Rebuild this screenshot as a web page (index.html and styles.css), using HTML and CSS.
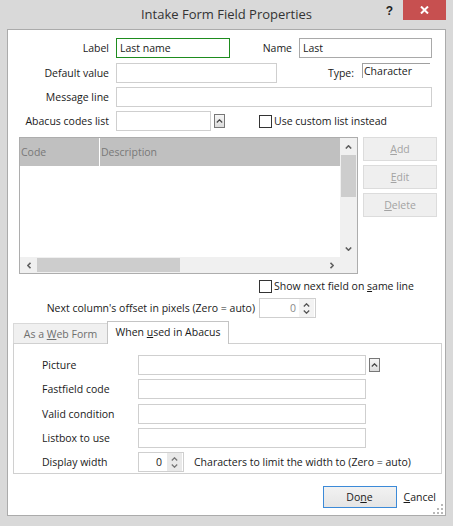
FILE: index.html
```html
<!DOCTYPE html>
<html>
<head>
<meta charset="utf-8">
<title>Intake Form Field Properties</title>
<link rel="stylesheet" href="styles.css">
</head>
<body>
<div class="window">
  <div class="titlebar">
    <div class="title">Intake Form Field Properties</div>
    <div class="controls">
      <span class="help">?</span>
      <span class="close"><svg width="9" height="8" viewBox="0 0 9 8"><path d="M1 0.5 L8 7.5 M8 0.5 L1 7.5" stroke="#fff" stroke-width="2"/></svg></span>
    </div>
  </div>
  <div class="client">
    <div class="top">
      <div class="row">
        <span class="lbl">Label</span>
        <div class="input w-label">Last name</div>
        <span class="lbl name-lbl">Name</span>
        <div class="input w-name">Last</div>
      </div>
      <div class="row r2">
        <span class="lbl">Default value</span>
        <div class="input w-default"></div>
        <span class="lbl type-lbl">Type:</span>
        <div class="static">Character</div>
      </div>
      <div class="row r3">
        <span class="lbl">Message line</span>
        <div class="input w-msg"></div>
      </div>
      <div class="row r3">
        <span class="lbl">Abacus codes list</span>
        <div class="input w-codes"></div>
        <span class="dropbtn"><svg width="7" height="4" viewBox="0 0 7 4"><polyline points="0.8,3.5 3.5,0.8 6.2,3.5" fill="none" stroke="#444" stroke-width="1.2"/></svg></span>
        <span class="check custom"><span class="box"></span><span>Use custom list instead</span></span>
      </div>
    </div>

    <div class="codes">
      <div class="grid">
        <div class="grid-top">
          <div class="grid-main">
            <div class="grid-head">
              <div class="col-code">Code</div>
              <div class="col-desc">Description</div>
            </div>
            <div class="grid-body"></div>
          </div>
          <div class="vscroll">
            <div class="sbtn"><svg width="7" height="4" viewBox="0 0 7 4"><polyline points="0.8,3.5 3.5,0.8 6.2,3.5" fill="none" stroke="#606060" stroke-width="1.6"/></svg></div>
            <div class="vthumb"></div>
            <div class="vtrack"></div>
            <div class="sbtn"><svg width="7" height="4" viewBox="0 0 7 4"><polyline points="0.8,0.5 3.5,3.2 6.2,0.5" fill="none" stroke="#606060" stroke-width="1.6"/></svg></div>
          </div>
        </div>
        <div class="hscroll">
          <div class="hbtn"><svg width="4" height="7" viewBox="0 0 4 7"><polyline points="3.5,0.8 0.8,3.5 3.5,6.2" fill="none" stroke="#606060" stroke-width="1.6"/></svg></div>
          <div class="hthumb"></div>
          <div class="htrack"></div>
          <div class="hbtn"><svg width="4" height="7" viewBox="0 0 4 7"><polyline points="0.5,0.8 3.2,3.5 0.5,6.2" fill="none" stroke="#606060" stroke-width="1.6"/></svg></div>
          <div class="corner"></div>
        </div>
      </div>
      <div class="btns">
        <div class="dbtn"><span><u>A</u>dd</span></div>
        <div class="dbtn"><span><u>E</u>dit</span></div>
        <div class="dbtn"><span><u>D</u>elete</span></div>
      </div>
    </div>

    <div class="check showrow"><span class="box"></span><span>Show next field on <u>s</u>ame line</span></div>

    <div class="offset-row">
      <span class="olbl">Next column's offset in pixels (Zero = auto)</span>
      <div class="spin spin-offset">
        <span class="val grey">0</span>
        <span class="arrows">
          <svg width="7" height="4" viewBox="0 0 7 4"><polyline points="0.8,3.5 3.5,0.8 6.2,3.5" fill="none" stroke="#555" stroke-width="1.3"/></svg>
          <svg width="7" height="4" viewBox="0 0 7 4"><polyline points="0.8,0.5 3.5,3.2 6.2,0.5" fill="none" stroke="#555" stroke-width="1.3"/></svg>
        </span>
      </div>
    </div>

    <div class="tabs">
      <div class="tab"><span>As a <u>W</u>eb Form</span></div>
      <div class="tab active"><span>When <u>u</u>sed in Abacus</span></div>
    </div>
    <div class="panel">
      <div class="prow">
        <span class="plbl">Picture</span>
        <div class="pinput"></div>
        <span class="dropbtn pdrop"><svg width="7" height="4" viewBox="0 0 7 4"><polyline points="0.8,3.5 3.5,0.8 6.2,3.5" fill="none" stroke="#444" stroke-width="1.2"/></svg></span>
      </div>
      <div class="prow">
        <span class="plbl">Fastfield code</span>
        <div class="pinput"></div>
      </div>
      <div class="prow">
        <span class="plbl">Valid condition</span>
        <div class="pinput"></div>
      </div>
      <div class="prow">
        <span class="plbl">Listbox to use</span>
        <div class="pinput"></div>
      </div>
      <div class="prow">
        <span class="plbl">Display width</span>
        <div class="spin spin-width">
          <span class="val">0</span>
          <span class="arrows">
            <svg width="7" height="4" viewBox="0 0 7 4"><polyline points="0.8,3.5 3.5,0.8 6.2,3.5" fill="none" stroke="#777" stroke-width="1.3"/></svg>
            <svg width="7" height="4" viewBox="0 0 7 4"><polyline points="0.8,0.5 3.5,3.2 6.2,0.5" fill="none" stroke="#777" stroke-width="1.3"/></svg>
          </span>
        </div>
        <span class="chars">Characters to limit the width to (Zero = auto)</span>
      </div>
    </div>

    <div class="footer">
      <div class="done"><span>Do<u>n</u>e</span></div>
      <div class="cancel"><u>C</u>ancel</div>
    </div>
    <svg class="grip" width="10" height="10" viewBox="0 0 10 10">
      <rect x="8" y="0" width="2" height="2" fill="#b8b8b8"/>
      <rect x="4" y="4" width="2" height="2" fill="#b8b8b8"/>
      <rect x="8" y="4" width="2" height="2" fill="#b8b8b8"/>
      <rect x="0" y="8" width="2" height="2" fill="#b8b8b8"/>
      <rect x="4" y="8" width="2" height="2" fill="#b8b8b8"/>
      <rect x="8" y="8" width="2" height="2" fill="#b8b8b8"/>
    </svg>
  </div>
</div>
</body>
</html>
```

FILE: styles.css
```css
* { box-sizing: border-box; }
html, body { margin: 0; padding: 0; }
body {
  font-family: "Open Sans", "Noto Sans", sans-serif;
  font-size: 10.5px;
  color: #1a1a1a;
  background: #d9d9d9;
}
.window {
  width: 453px;
  height: 526px;
  background: #d9d9d9;
  display: flex;
  flex-direction: column;
  overflow: hidden;
}
.titlebar {
  height: 29px;
  flex: none;
  display: grid;
}
.title, .controls { grid-area: 1 / 1; }
.title {
  text-align: center;
  line-height: 29px;
  font-size: 13px;
  color: #333;
}
.controls {
  justify-self: end;
  align-self: start;
  display: flex;
  align-items: flex-start;
  margin-right: 7px;
}
.help {
  font-family: "Liberation Sans", sans-serif;
  font-weight: bold;
  font-size: 12px;
  line-height: 12px;
  margin-top: 5px;
  margin-right: 10px;
  color: #222;
}
.close {
  width: 43px;
  height: 20px;
  background: #c75050;
  display: flex;
  align-items: center;
  justify-content: center;
}
.client {
  margin: 0 7px;
  height: 487px;
  background: #fff;
  border: 1px solid #ababab;
  position: relative;
}
.top {
  padding-top: 8px;
  display: flex;
  flex-direction: column;
}
.row {
  display: flex;
  align-items: center;
  height: 20px;
}
.r2 { margin-top: 5px; }
.r3 { margin-top: 4px; }
.lbl {
  width: 101px;
  margin-right: 7px;
  text-align: right;
  white-space: nowrap;
}
.input {
  height: 20px;
  border: 1px solid #cfcfcf;
  background: #fff;
  padding-left: 3px;
  line-height: 18px;
  white-space: nowrap;
}
.w-label { width: 114px; border-color: #1e8c1e; }
.name-lbl { width: 62px; }
.w-name { width: 133px; border-color: #a9a9a9; }
.w-default { width: 161px; }
.type-lbl { width: 77px; margin-right: 8px; }
.static {
  width: 68px;
  height: 15px;
  align-self: flex-start;
  border-top: 1px solid #a0a0a0;
  border-left: 1px solid #a0a0a0;
  line-height: 14px;
  padding-left: 1px;
}
.w-msg { width: 316px; }
.w-codes { width: 95px; margin-right: 3px; }
.dropbtn {
  width: 11px;
  height: 14px;
  border: 1px solid #777;
  background: linear-gradient(#f6f6f6, #dcdcdc);
  display: flex;
  align-items: center;
  justify-content: center;
}
.check {
  display: flex;
  align-items: center;
  white-space: nowrap;
}
.custom { margin-left: 34px; }
.box {
  width: 13px;
  height: 13px;
  border: 1px solid #333;
  background: #fff;
  margin-right: 2px;
  flex: none;
}

/* codes grid */
.codes {
  display: flex;
  gap: 5px;
  margin-top: 6px;
  padding-left: 11px;
}
.grid {
  width: 339px;
  height: 137px;
  border: 1px solid #adadad;
  display: flex;
  flex-direction: column;
}
.grid-top {
  height: 119px;
  display: flex;
}
.grid-main {
  flex: 1;
  display: flex;
  flex-direction: column;
}
.grid-head {
  height: 28px;
  background: #c0c0c0;
  display: flex;
  color: #787878;
  line-height: 28px;
}
.col-code {
  width: 80px;
  padding-left: 1px;
  border-right: 1px solid #fff;
}
.col-desc { padding-left: 1px; }
.grid-body { flex: 1; background: #fff; }
.vscroll {
  width: 17px;
  background: #f0f0f0;
  display: flex;
  flex-direction: column;
}
.sbtn {
  height: 17px;
  display: flex;
  align-items: center;
  justify-content: center;
}
.vthumb {
  height: 42px;
  margin: 0 1px;
  background: #cdcdcd;
}
.vtrack { flex: 1; }
.hscroll {
  height: 16px;
  background: #f0f0f0;
  display: flex;
}
.hbtn {
  width: 17px;
  display: flex;
  align-items: center;
  justify-content: center;
}
.hthumb {
  width: 143px;
  margin: 1px 0;
  background: #cdcdcd;
}
.htrack { flex: 1; }
.corner { width: 17px; background: #f0f0f0; }
.btns {
  width: 74px;
  display: flex;
  flex-direction: column;
  gap: 4px;
}
.dbtn {
  height: 24px;
  border: 1px solid #dcdcdc;
  background: #efefef;
  color: #a3a3a3;
  display: flex;
  align-items: center;
  justify-content: center;
}

.showrow {
  margin-top: 5px;
  height: 14px;
  padding-left: 251px;
}
.offset-row {
  margin-top: 5px;
  display: flex;
  align-items: center;
  height: 20px;
}
.olbl {
  width: 247px;
  margin-right: 4px;
  text-align: right;
  white-space: nowrap;
}
.spin {
  height: 20px;
  border: 1px solid #cfcfcf;
  display: flex;
  align-items: center;
}
.spin .val {
  flex: 1;
  text-align: right;
}
.spin .arrows {
  width: 15px;
  height: 18px;
  margin-right: 1px;
  display: flex;
  flex-direction: column;
  align-items: center;
  justify-content: center;
  gap: 3px;
  background: #e9e9e9;
}
.spin-offset { width: 57px; }
.spin-offset .val { padding-right: 3px; }
.spin-offset .arrows { background: #f3f3f3; }
.grey { color: #8a8a8a; }
.spin-width { width: 46px; }
.spin-width .val { padding-right: 5px; }

/* tabs */
.tabs {
  display: flex;
  align-items: flex-end;
  margin-top: 3px;
  padding-left: 5px;
  height: 22px;
}
.tab {
  width: 94px;
  height: 20px;
  border: 1px solid #d9d9d9;
  border-bottom: none;
  border-right: none;
  background: #f0f0f0;
  color: #6e6e6e;
  display: flex;
  align-items: center;
  justify-content: center;
  white-space: nowrap;
}
.tab.active {
  width: 122px;
  height: 23px;
  margin-bottom: -1px;
  background: #fff;
  color: #1a1a1a;
  border: 1px solid #c4c4c4;
  border-bottom: none;
  position: relative;
  z-index: 1;
  padding-bottom: 2px;
}
.panel {
  margin-left: 5px;
  width: 429px;
  height: 131px;
  border: 1px solid #d0d0d0;
  padding: 11px 0 0 28px;
  display: flex;
  flex-direction: column;
  gap: 4.25px;
}
.prow {
  display: flex;
  align-items: center;
  height: 20px;
}
.plbl { width: 96px; white-space: nowrap; }
.pinput {
  width: 228px;
  height: 20px;
  border: 1px solid #cfcfcf;
}
.pdrop { margin-left: 3px; }
.chars { margin-left: 10px; white-space: nowrap; }

.footer {
  display: flex;
  justify-content: flex-end;
  align-items: center;
  margin-top: 12px;
  padding-right: 9px;
}
.done {
  width: 74px;
  height: 22px;
  border: 1px solid #3c8ad8;
  background: linear-gradient(#f2f2f2, #e5e5e5);
  display: flex;
  align-items: center;
  justify-content: center;
  margin-right: 7px;
}
.grip {
  position: absolute;
  right: 2px;
  bottom: 1px;
}
```
